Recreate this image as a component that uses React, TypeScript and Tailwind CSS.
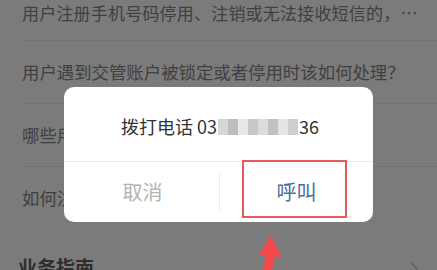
const rows = [
  '用户注册手机号码停用、注销或无法接收短信的，…',
  '用户遇到交管账户被锁定或者停用时该如何处理？',
  '哪些用户可以申请注销交管账户？',
  '如何注销交管账户？',
];

const blur = ['#d6d6d6', '#bdbdbd', '#e8e8e8', '#c8c8c8', '#dcdcdc', '#c2c2c2', '#e4e4e4', '#cfcfcf'];

export default function App() {
  return (
    <div
      className="relative w-[437px] h-[270px] overflow-hidden bg-[#7b7b7b]"
      style={{ fontFamily: '"Noto Sans CJK SC", "Noto Sans", sans-serif' }}
    >
      {/* list behind the mask */}
      <div className="pl-[22px]">
        <div className="h-[41px] pt-[1px] border-b border-[#727272] text-[17px] tracking-[0.2px] leading-[24px] text-[#404040] whitespace-nowrap">
          {rows[0]}
        </div>
        {rows.slice(1).map((r, i) => (
          <div
            key={r}
            className={`h-[63px] flex items-center text-[17.4px] text-[#404040] whitespace-nowrap ${
              i < 2 ? 'border-b border-[#727272]' : ''
            }`}
          >
            {r}
          </div>
        ))}
        <div className="h-[25px]" />
        <div className="flex items-center justify-between pr-[18px] -ml-[4px]">
          <span className="text-[19px] font-bold text-[#2e2e2e] leading-[24px]">业务指南</span>
          <svg width="10" height="16" viewBox="0 0 10 16" className="mt-[4px]">
            <path d="M2 1 L8 8 L2 15" stroke="#5f5f5f" strokeWidth="1.4" fill="none" />
          </svg>
        </div>
      </div>

      {/* call dialog */}
      <div className="absolute left-[64px] top-[87px] w-[309px] h-[135px] bg-white rounded-[10px] flex flex-col">
        <div className="h-[75px] flex items-center justify-center pt-[5px] pl-[3px] text-[18px] text-[#333333] border-b border-[#ebebeb]">
          <span>拨打电话 03</span>
          <span className="flex h-[16px] mx-[1px]">
            {blur.map((c, i) => (
              <span key={i} className="w-[10px] h-full" style={{ background: c }} />
            ))}
          </span>
          <span>36</span>
        </div>
        <div className="flex-1 flex items-center">
          <div className="flex-1 text-center text-[20px] text-[#b3b3b3] pl-[2px]">取消</div>
          <div className="w-px h-[38px] bg-[#ececec]" />
          <div className="flex-1 text-center text-[20px] text-[#4d6f9c]">呼叫</div>
        </div>
      </div>

      {/* annotation */}
      <div className="absolute left-[242px] top-[160px] w-[105px] h-[58px] border-2 border-[#e35b5b]" />
      <svg className="absolute left-[254px] top-[233px]" width="32" height="37" viewBox="0 0 32 37">
        <path d="M17 2 L28 25 L21 23 L18 37 L9 37 L12 22 L5 22 Z" fill="#f24a4a" />
      </svg>
    </div>
  );
}
